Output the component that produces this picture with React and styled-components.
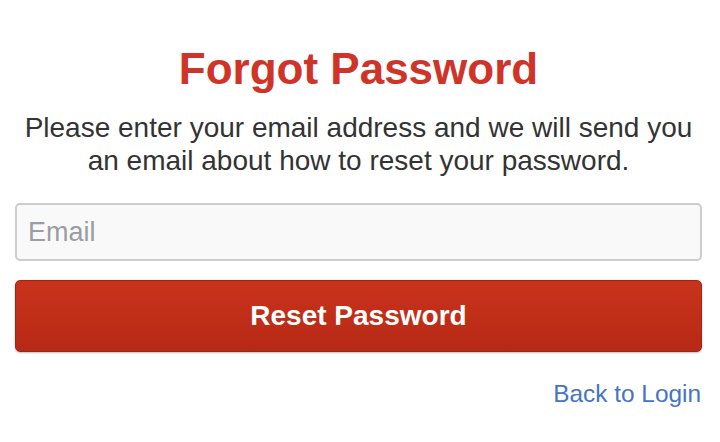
import React from "react";
import styled, { createGlobalStyle } from "styled-components";

const GlobalStyle = createGlobalStyle`
  html, body {
    margin: 0;
    padding: 0;
    background: #ffffff;
    font-family: "Liberation Sans", Arial, sans-serif;
  }
`;

const Page = styled.div`
  width: 720px;
  height: 442px;
  box-sizing: border-box;
  padding: 45px 18px 0 15px;
  display: flex;
  flex-direction: column;
`;

const Title = styled.h1`
  margin: 0;
  text-align: center;
  font-size: 44px;
  line-height: 48px;
  font-weight: bold;
  color: #cf3429;
`;

const Intro = styled.p`
  margin: 18px 0 0;
  text-align: center;
  font-size: 28px;
  line-height: 33px;
  color: #333333;
`;

const EmailInput = styled.input`
  margin-top: 26px;
  height: 58px;
  box-sizing: border-box;
  padding: 0 11px;
  border: 2px solid #cdcdcd;
  border-radius: 5px;
  background: #f9f9f9;
  font-family: inherit;
  font-size: 27px;
  color: #333;
  outline: none;

  &::placeholder {
    color: #9a9da3;
  }
`;

const ResetButton = styled.button`
  margin-top: 19px;
  height: 72px;
  border: 1px solid #9f2414;
  border-radius: 5px;
  background: linear-gradient(#ca331b, #b62916);
  box-shadow: 0 1px 2px rgba(0, 0, 0, 0.25);
  color: #ffffff;
  font-family: inherit;
  font-size: 28px;
  font-weight: bold;
  cursor: pointer;
`;

const Footer = styled.div`
  margin-top: 27px;
  display: flex;
  justify-content: flex-end;
  padding-right: 1px;
`;

const BackLink = styled.a`
  color: #4574c4;
  font-size: 24.4px;
  line-height: 29px;
  text-decoration: none;
`;

const App = () => {
  return (
    <>
      <GlobalStyle />
      <Page>
        <Title>Forgot Password</Title>
        <Intro>
          Please enter your email address and we will send you
          <br />
          an email about how to reset your password.
        </Intro>
        <EmailInput type="email" placeholder="Email" />
        <ResetButton>Reset Password</ResetButton>
        <Footer>
          <BackLink href="#">Back to Login</BackLink>
        </Footer>
      </Page>
    </>
  );
};

export default App;
